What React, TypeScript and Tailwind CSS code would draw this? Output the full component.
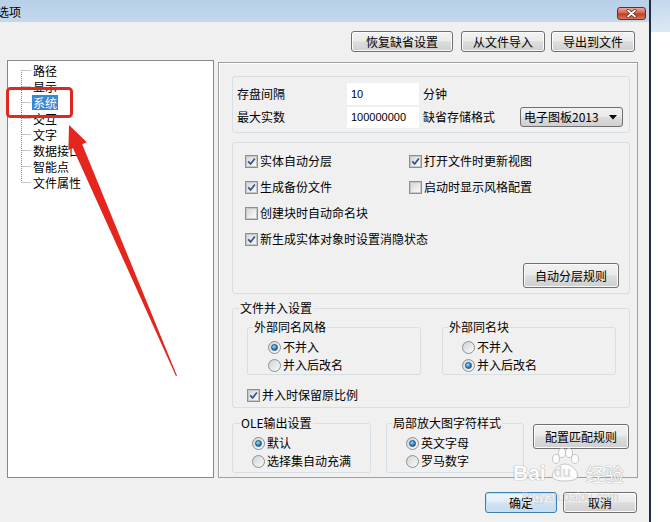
import React from "react";

const btnBase =
  "flex items-center justify-center rounded-[3px] border border-[#707070] bg-[linear-gradient(#f2f2f2,#ebebeb_45%,#dddddd_52%,#cfcfcf)] shadow-[inset_0_0_0_1px_#fbfbfb] text-[12px] leading-none text-black";

const Btn = ({ label, className }: { label: string; className: string }) => (
  <button className={`${btnBase} ${className}`}>{label}</button>
);

const Check = ({ on }: { on?: boolean }) => (
  <span className="flex h-[13px] w-[13px] shrink-0 items-center justify-center border border-[#8e8f8f] bg-[#f4f4f4]">
    <span className="flex h-[11px] w-[11px] items-center justify-center border border-[#c6c6c6] bg-[linear-gradient(135deg,#d3d7dc,#fbfbfb)]">
      {on && (
        <svg width="9" height="9" viewBox="0 0 9 9">
          <path d="M1.2 4.4 L3.6 6.9 L7.9 1.4" fill="none" stroke="#3b4f87" strokeWidth="1.7" />
        </svg>
      )}
    </span>
  </span>
);

const Radio = ({ on }: { on?: boolean }) => (
  <span className="flex h-[13px] w-[13px] shrink-0 items-center justify-center rounded-full border border-[#8e8f8f] bg-[linear-gradient(135deg,#cfd3d8,#fafafa)]">
    {on && (
      <span className="h-[7px] w-[7px] rounded-full border border-[#1d4f78] bg-[radial-gradient(circle_at_35%_30%,#a6dcf8,#2a7cbf_60%,#1a4f80)]" />
    )}
  </span>
);

const CheckRow = ({ on, label, className = "" }: { on?: boolean; label: string; className?: string }) => (
  <div className={`flex items-center gap-[2px] ${className}`}>
    <Check on={on} />
    <span className="leading-[16px]">{label}</span>
  </div>
);

const RadioRow = ({ on, label }: { on?: boolean; label: string }) => (
  <div className="flex h-[18px] items-center gap-[2px]">
    <Radio on={on} />
    <span className="leading-[16px]">{label}</span>
  </div>
);

const treeItems = ["路径", "显示", "系统", "交互", "文字", "数据接口", "智能点", "文件属性"];

export default function App() {
  return (
    <div className="relative flex h-[522px] w-[670px] overflow-hidden bg-white font-['Noto_Sans_CJK_SC',sans-serif] text-[12px] text-black">
      {/* dialog window */}
      <div className="flex w-[649px] flex-col bg-[#f0f0f0]">
        <div className="flex h-[22px] items-start bg-[linear-gradient(#b7cfe8,#c4d8ed)]">
          <span className="-ml-[3px] mt-[4px] leading-[16px]">选项</span>
          <div className="ml-auto mr-[3px] mt-[7px] flex h-[13px] w-[29px] items-center justify-center rounded-[3px] border border-[#6d2a1f] bg-[linear-gradient(#eaa99b,#d2624a_45%,#c03c22_55%,#d97a5e)]">
            <svg width="11" height="9" viewBox="0 0 11 9">
              <path d="M2 1.5 L9 7.5 M9 1.5 L2 7.5" stroke="#5a1a10" strokeWidth="3" strokeLinecap="round" />
              <path d="M2 1.5 L9 7.5 M9 1.5 L2 7.5" stroke="#fff" strokeWidth="1.8" strokeLinecap="round" />
            </svg>
          </div>
        </div>

        <div className="mt-[9px] flex justify-end pr-[14px]">
          <Btn label="恢复缺省设置" className="h-[21px] w-[102px]" />
          <Btn label="从文件导入" className="ml-[8px] h-[21px] w-[84px]" />
          <Btn label="导出到文件" className="ml-[6px] h-[21px] w-[84px]" />
        </div>

        <div className="mt-[8px] flex items-start pl-[7px]">
          <div className="h-[418px] w-[207px] border border-[#828790] bg-white pt-[1px]">
            {treeItems.map((t, i) => (
              <div key={t} className="flex h-[16px] items-center pl-[13px]">
                <svg width="11" height="16" viewBox="0 0 11 16" className="shrink-0">
                  <path
                    d={`M0.5 ${i === 0 ? 8 : 0} L0.5 ${i === treeItems.length - 1 ? 8 : 16} M0.5 8.5 L10 8.5`}
                    stroke="#8a8a8a"
                    strokeDasharray="1 1"
                    fill="none"
                  />
                </svg>
                <span
                  className={`px-[1px] leading-[15px] ${t === "系统" ? "bg-[#3a87d4] text-white" : ""}`}
                >
                  {t}
                </span>
              </div>
            ))}
          </div>

          <div className="ml-[4px] mt-[2px] flex h-[416px] w-[420px] flex-col border border-[#a0a0a0] pl-[13px] pt-[13px] shadow-[inset_1px_1px_0_#fff]">
            {/* save settings */}
            <div className="flex h-[57px] w-[398px] flex-col gap-[1px] rounded-[3px] border border-[#d5dfe5] pl-[4px] pt-[6px]">
              <div className="flex h-[22px] items-center">
                <span className="w-[110px]">存盘间隔</span>
                <span className="flex h-[22px] w-[72px] items-center bg-white pl-[4px] font-['Liberation_Sans',sans-serif] text-[11px]">
                  10
                </span>
                <span className="ml-[4px]">分钟</span>
              </div>
              <div className="flex h-[22px] items-center">
                <span className="w-[110px]">最大实数</span>
                <span className="flex h-[21px] w-[72px] items-center bg-white pl-[4px] font-['Liberation_Sans',sans-serif] text-[11px]">
                  100000000
                </span>
                <span className="ml-[4px] w-[97px]">缺省存储格式</span>
                <div className="flex h-[20px] w-[103px] items-center justify-between rounded-[3px] border border-[#707070] bg-[linear-gradient(#f2f2f2,#ebebeb_45%,#dddddd_52%,#cfcfcf)] pl-[3px] pr-[5px]">
                  <span>电子图板2013</span>
                  <svg width="8" height="5" viewBox="0 0 8 5">
                    <path d="M0 0 L8 0 L4 4.5 Z" fill="#000" />
                  </svg>
                </div>
              </div>
            </div>

            {/* options */}
            <div className="mt-[9px] flex h-[152px] w-[398px] flex-col rounded-[3px] border border-[#d5dfe5] pl-[12px] pt-[5px]">
              <div className="grid grid-cols-[164px_1fr] grid-rows-[26px_26px_26px_26px] items-center">
                <CheckRow on label="实体自动分层" />
                <CheckRow on label="打开文件时更新视图" />
                <CheckRow on label="生成备份文件" />
                <CheckRow label="启动时显示风格配置" />
                <CheckRow label="创建块时自动命名块" className="col-span-2" />
                <CheckRow on label="新生成实体对象时设置消隐状态" className="col-span-2" />
              </div>
              <Btn label="自动分层规则" className="mr-[10px] mt-[11px] h-[25px] w-[96px] self-end" />
            </div>

            {/* merge settings */}
            <fieldset className="mt-[6px] h-[108px] w-[398px] rounded-[3px] border border-[#d5dfe5]">
              <legend className="ml-[6px] px-[1px] leading-[16px]">文件并入设置</legend>
              <div className="mt-[3px] flex gap-[21px] pl-[14px]">
                <fieldset className="h-[56px] w-[174px] rounded-[3px] border border-[#d5dfe5]">
                  <legend className="ml-[5px] px-[1px] leading-[16px]">外部同名风格</legend>
                  <div className="pl-[20px] pt-[3px]">
                    <RadioRow on label="不并入" />
                    <RadioRow label="并入后改名" />
                  </div>
                </fieldset>
                <fieldset className="h-[56px] w-[174px] rounded-[3px] border border-[#d5dfe5]">
                  <legend className="ml-[5px] px-[1px] leading-[16px]">外部同名块</legend>
                  <div className="pl-[19px] pt-[3px]">
                    <RadioRow label="不并入" />
                    <RadioRow on label="并入后改名" />
                  </div>
                </fieldset>
              </div>
              <CheckRow on label="并入时保留原比例" className="mt-[12px] h-[16px] pl-[14px]" />
            </fieldset>

            <div className="mt-[7px] flex items-start">
              <fieldset className="h-[58px] w-[139px] rounded-[3px] border border-[#d5dfe5]">
                <legend className="ml-[7px] px-[1px] leading-[16px]">OLE输出设置</legend>
                <div className="pl-[19px] pt-[3px]">
                  <RadioRow on label="默认" />
                  <RadioRow label="选择集自动充满" />
                </div>
              </fieldset>
              <fieldset className="ml-[15px] h-[58px] w-[138px] rounded-[3px] border border-[#d5dfe5]">
                <legend className="ml-[5px] px-[1px] leading-[16px]">局部放大图字符样式</legend>
                <div className="pl-[19px] pt-[3px]">
                  <RadioRow on label="英文字母" />
                  <RadioRow label="罗马数字" />
                </div>
              </fieldset>
              <Btn label="配置匹配规则" className="ml-[9px] mt-[9px] h-[25px] w-[96px]" />
            </div>
          </div>
        </div>

        <div className="mt-[14px] flex justify-end gap-[6px] pr-[12px]">
          <button className="flex h-[21px] w-[72px] items-center justify-center rounded-[3px] border border-[#3c7fb1] bg-[linear-gradient(#eef6fb,#e1eef7_48%,#cfe4f3_52%,#c4dcef)] shadow-[inset_0_0_0_1px_#bfe3f8] text-[12px] leading-none">
            确定
          </button>
          <Btn label="取消" className="h-[21px] w-[74px]" />
        </div>
      </div>

      <div className="w-[2px] bg-[#1d2d44]" />
      <div className="flex w-[19px] flex-col">
        <div className="h-[32px] bg-[linear-gradient(#c3d7ec,#dde9f5)]" />
        <div className="flex-1 bg-white" />
      </div>

      {/* red annotation */}
      <svg className="pointer-events-none absolute left-0 top-0" width="670" height="522" viewBox="0 0 670 522">
        <rect x="7.5" y="88.5" width="64" height="28" rx="3" fill="none" stroke="#e0281f" strokeWidth="3" />
        <polygon
          points="69,125 86.8,142.3 82.2,144.2 177,375.8 176,376.2 73,148.2 68.4,150.1"
          fill="#e5261e"
        />
      </svg>

      {/* watermark */}
      <div className="pointer-events-none absolute left-[513px] top-[448px] flex items-end opacity-90">
        <span className="font-['Liberation_Sans',sans-serif] text-[21px] font-bold leading-none text-white [text-shadow:0_0_1px_#9a9a9a,0_0_1px_#9a9a9a]">
          Bai
        </span>
        <div className="relative ml-[1px] h-[35px] w-[36px]">
          <svg width="36" height="35" viewBox="0 0 36 35">
            <g fill="#fff" stroke="#b5b5b5" strokeWidth="0.8">
              <ellipse cx="9" cy="11" rx="3.5" ry="4.5" />
              <ellipse cx="15" cy="5" rx="3.5" ry="4.5" />
              <ellipse cx="22" cy="5" rx="3.5" ry="4.5" />
              <ellipse cx="28" cy="11" rx="3.5" ry="4.5" />
              <path d="M6 30 C3 26 10 16 18 16 C26 16 33 26 30 30 C27 34 9 34 6 30 Z" />
            </g>
          </svg>
          <span className="absolute left-[7px] top-[17px] font-['Liberation_Sans',sans-serif] text-[14px] font-bold leading-none text-[#d8d8d8]">
            du
          </span>
        </div>
        <span className="ml-[3px] text-[19px] leading-none text-white [text-shadow:0_0_1px_#9a9a9a,0_0_1px_#9a9a9a]">
          经验
        </span>
      </div>
      <span className="pointer-events-none absolute left-[522px] top-[491px] font-['Liberation_Sans',sans-serif] text-[12px] leading-none text-[#c9c9c9] opacity-70">
        jingyan.baidu.com
      </span>
    </div>
  );
}
